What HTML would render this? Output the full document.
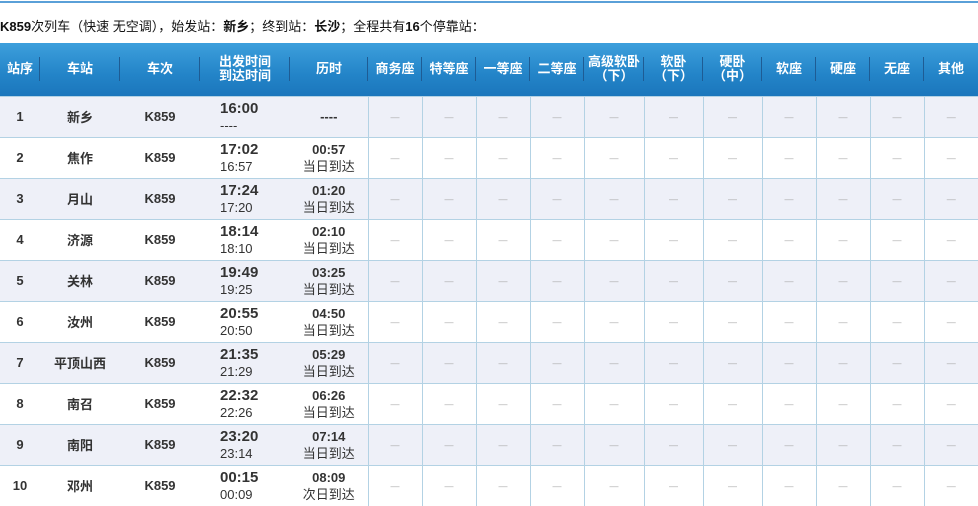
<!DOCTYPE html>
<html><head><meta charset="utf-8"><style>
*{margin:0;padding:0;box-sizing:border-box}
body{width:978px;height:505px;overflow:hidden;background:#fff;font-family:"Liberation Sans","Noto Sans CJK SC",sans-serif;color:#333}
.topline{position:absolute;left:0;top:1px;width:978px;height:2px;background:#5aa0d8}
.title{position:absolute;left:0;top:16px;font-size:13px;color:#111;white-space:nowrap}
.title b{font-weight:bold}
table{position:absolute;left:0;top:43px;border-collapse:collapse;table-layout:fixed;width:978px}
th{height:53px;color:#fff;font-size:13px;font-weight:bold;background:linear-gradient(#3d9fdc,#2384c8 60%,#1b76bc);line-height:14px;position:relative;text-align:center}
th:not(:last-child)::after{content:"";position:absolute;right:0;top:14px;height:24px;width:1px;background:#1e5c94}
td{height:41px;border-top:1px solid #b3d2e4;text-align:center;font-size:13px;font-weight:bold;color:#333}
tr.o td{background:#eef0f8}
td.s{border-left:1px solid #b3d2e4;color:#aaa;font-weight:normal;font-size:9px}
td.t{text-align:left;padding-left:20px;line-height:17px}
td.t b{font-size:15px;display:block}
td.t span{font-weight:normal;font-size:13px;display:block}
td.d{line-height:17px}
td.d span{font-weight:normal;display:block}
</style></head><body>
<div class="topline"></div>
<div class="title"><b>K859</b>次列车（快速 无空调），始发站：<b>新乡</b>；终到站：<b>长沙</b>；全程共有<b>16</b>个停靠站：</div>
<table>
<colgroup><col style="width:40px"><col style="width:80px"><col style="width:80px"><col style="width:90px"><col style="width:78px"><col style="width:54px"><col style="width:54px"><col style="width:54px"><col style="width:54px"><col style="width:60px"><col style="width:59px"><col style="width:59px"><col style="width:54px"><col style="width:54px"><col style="width:54px"><col style="width:54px"></colgroup>
<tr><th>站序</th><th>车站</th><th>车次</th><th>出发时间<br>到达时间</th><th>历时</th><th>商务座</th><th>特等座</th><th>一等座</th><th>二等座</th><th>高级软卧<br>（下）</th><th>软卧<br>（下）</th><th>硬卧<br>（中）</th><th>软座</th><th>硬座</th><th>无座</th><th>其他</th></tr>
<tr class="o"><td>1</td><td>新乡</td><td>K859</td><td class="t"><b>16:00</b><span>----</span></td><td class="d">----</td><td class="s">—</td><td class="s">—</td><td class="s">—</td><td class="s">—</td><td class="s">—</td><td class="s">—</td><td class="s">—</td><td class="s">—</td><td class="s">—</td><td class="s">—</td><td class="s">—</td></tr>
<tr><td>2</td><td>焦作</td><td>K859</td><td class="t"><b>17:02</b><span>16:57</span></td><td class="d">00:57<span>当日到达</span></td><td class="s">—</td><td class="s">—</td><td class="s">—</td><td class="s">—</td><td class="s">—</td><td class="s">—</td><td class="s">—</td><td class="s">—</td><td class="s">—</td><td class="s">—</td><td class="s">—</td></tr>
<tr class="o"><td>3</td><td>月山</td><td>K859</td><td class="t"><b>17:24</b><span>17:20</span></td><td class="d">01:20<span>当日到达</span></td><td class="s">—</td><td class="s">—</td><td class="s">—</td><td class="s">—</td><td class="s">—</td><td class="s">—</td><td class="s">—</td><td class="s">—</td><td class="s">—</td><td class="s">—</td><td class="s">—</td></tr>
<tr><td>4</td><td>济源</td><td>K859</td><td class="t"><b>18:14</b><span>18:10</span></td><td class="d">02:10<span>当日到达</span></td><td class="s">—</td><td class="s">—</td><td class="s">—</td><td class="s">—</td><td class="s">—</td><td class="s">—</td><td class="s">—</td><td class="s">—</td><td class="s">—</td><td class="s">—</td><td class="s">—</td></tr>
<tr class="o"><td>5</td><td>关林</td><td>K859</td><td class="t"><b>19:49</b><span>19:25</span></td><td class="d">03:25<span>当日到达</span></td><td class="s">—</td><td class="s">—</td><td class="s">—</td><td class="s">—</td><td class="s">—</td><td class="s">—</td><td class="s">—</td><td class="s">—</td><td class="s">—</td><td class="s">—</td><td class="s">—</td></tr>
<tr><td>6</td><td>汝州</td><td>K859</td><td class="t"><b>20:55</b><span>20:50</span></td><td class="d">04:50<span>当日到达</span></td><td class="s">—</td><td class="s">—</td><td class="s">—</td><td class="s">—</td><td class="s">—</td><td class="s">—</td><td class="s">—</td><td class="s">—</td><td class="s">—</td><td class="s">—</td><td class="s">—</td></tr>
<tr class="o"><td>7</td><td>平顶山西</td><td>K859</td><td class="t"><b>21:35</b><span>21:29</span></td><td class="d">05:29<span>当日到达</span></td><td class="s">—</td><td class="s">—</td><td class="s">—</td><td class="s">—</td><td class="s">—</td><td class="s">—</td><td class="s">—</td><td class="s">—</td><td class="s">—</td><td class="s">—</td><td class="s">—</td></tr>
<tr><td>8</td><td>南召</td><td>K859</td><td class="t"><b>22:32</b><span>22:26</span></td><td class="d">06:26<span>当日到达</span></td><td class="s">—</td><td class="s">—</td><td class="s">—</td><td class="s">—</td><td class="s">—</td><td class="s">—</td><td class="s">—</td><td class="s">—</td><td class="s">—</td><td class="s">—</td><td class="s">—</td></tr>
<tr class="o"><td>9</td><td>南阳</td><td>K859</td><td class="t"><b>23:20</b><span>23:14</span></td><td class="d">07:14<span>当日到达</span></td><td class="s">—</td><td class="s">—</td><td class="s">—</td><td class="s">—</td><td class="s">—</td><td class="s">—</td><td class="s">—</td><td class="s">—</td><td class="s">—</td><td class="s">—</td><td class="s">—</td></tr>
<tr><td>10</td><td>邓州</td><td>K859</td><td class="t"><b>00:15</b><span>00:09</span></td><td class="d">08:09<span>次日到达</span></td><td class="s">—</td><td class="s">—</td><td class="s">—</td><td class="s">—</td><td class="s">—</td><td class="s">—</td><td class="s">—</td><td class="s">—</td><td class="s">—</td><td class="s">—</td><td class="s">—</td></tr>
</table>
</body></html>
